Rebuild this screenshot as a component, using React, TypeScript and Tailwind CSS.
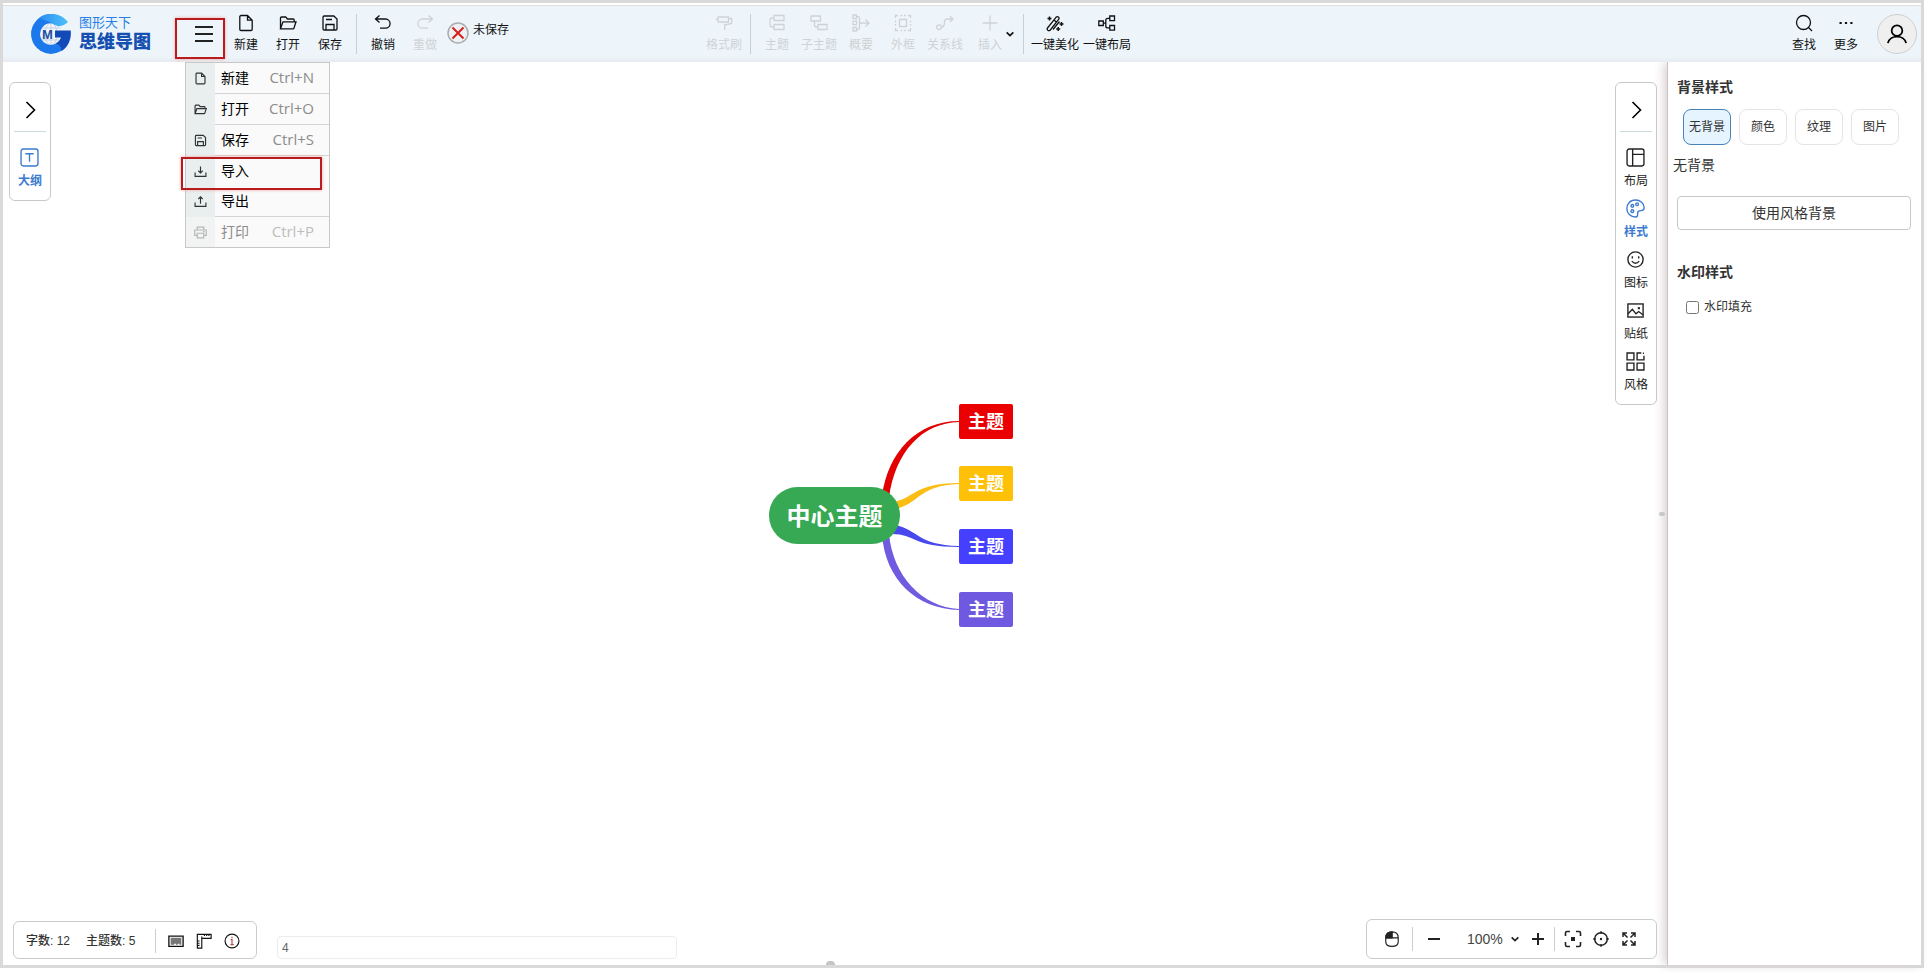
import { useState } from 'react'
import type { ReactNode } from 'react'

// --- ICONS ---
function Svg({ children, className = 'size-[18px]', w = 1.3 }: { children: ReactNode; className?: string; w?: number }) {
  return (
    <svg viewBox="0 0 18 18" className={className} fill="none" stroke="currentColor" strokeWidth={w} aria-hidden="true">
      {children}
    </svg>
  )
}

const icons: Record<string, ReactNode> = {
  file: <path d="M10.5 1.5H4A1.2 1.2 0 0 0 2.8 2.7v12.6A1.2 1.2 0 0 0 4 16.5h10a1.2 1.2 0 0 0 1.2-1.2V6.2zM10.5 1.5v4.7h4.7" />,
  folder: <path d="M1.5 14.8V4a1 1 0 0 1 1-1h4.2l1.8 2h5.7a1 1 0 0 1 1 1v1.8M1.5 14.8 4 7.8h13l-2 6.2a1 1 0 0 1-1 .8z" />,
  save: <path d="M2 3.2A1.2 1.2 0 0 1 3.2 2h9.6L16 5v9.8a1.2 1.2 0 0 1-1.2 1.2H3.2A1.2 1.2 0 0 1 2 14.8zM5 5.5h6M5 16v-5.500h8V16" />,
  undo: <path d="M5.5 1.5 1.5 5l4 3.5M1.5 5h10a4.6 4.6 0 0 1 0 9.2H6" />,
  redo: <path d="m12.5 1.5 4 3.5-4 3.5M16.5 5h-10a4.6 4.6 0 0 0 0 9.2H12" />,
  brush: <path d="M3 3h10.500v5H3zM3 5.500H.8M13.500 4.500h3.200v4.800l-7 1.700v5" strokeLinejoin="round" />,
  topic: <path d="M6 1.500h10v5H6zM6 10.500h10v5H6zM6 4H4.200Q2 4 2 6v5q0 2 2.200 2H6" strokeLinejoin="round" />,
  subtopic: <path d="M1 2h9.500v5H1zM8 10.500h9v5H8zM4.500 7v4q0 2 2 2H8" strokeLinejoin="round" />,
  summary: <path d="M1 1h3.500v3.500H1zM1 7.200h3.500v3.500H1zM1 13.500h3.500V17H1zM4.500 2.700h1.800Q7.500 2.700 7.500 4v10q0 1.300-1.200 1.300H4.500M7.500 9H17M13.500 5.500 17 9l-3.500 3.500" />,
  frame: (
    <>
      <path d="M5.500 5.500h7v7h-7z" />
      <path d="M1.500 4V1.500H4M6.500 1.500h1.800M10 1.500h1.800M14 1.500h2.500V4M16.500 6.500v1.800M16.500 10v1.800M16.500 14v2.500H14M11.800 16.500H10M8.300 16.500H6.500M4 16.500H1.500V14M1.500 11.800V10M1.500 8.300V6.500" />
    </>
  ),
  relation: (
    <>
      <circle cx="3" cy="13.2" r="2.3" />
      <path d="M5.300 13.200C11 13.200 6 5 11 5h6M13.800 2 17 5l-3.200 3" />
    </>
  ),
  plus: <path d="M9 1.500v15M1.500 9h15" />,
  magic: (
    <>
      <path d="M1.500 14 10 3.300q1.200-1.300 2.400-.3 1.200 1 .2 2.300L4.300 16q-1.200 1.200-2.500.2-1.200-1-.3-2.200zM8 6l2.600 2.200M7 15.500l6.500-8" />
      <path d="M3.500 2.500v4M1.500 4.500h4M15.500 8v4M13.500 10h4M12.200 13v4M10.200 15h4" strokeWidth="1.5" />
    </>
  ),
  autoLayout: <path d="M.8 7h4.500v4.500H.8zM11.800 2h4.700v4.700h-4.700zM11.800 11.500h4.700v4.700h-4.700zM5.300 9.200h2.500M11.800 4.300h-2q-2 0-2 2v5.600q0 2 2 2h2" />,
  search: (
    <>
      <circle cx="8.5" cy="8.5" r="7" />
      <path d="m13.500 13.500 3.500 3.500" />
    </>
  ),
  more: <path d="M2.500 9h2.200M7.900 9h2.200M13.300 9h2.200" strokeWidth="2.2" />,
  user: (
    <>
      <circle cx="9" cy="6" r="4.8" />
      <path d="M.8 17.200c1.700-7.800 14.700-7.800 16.400 0" />
    </>
  ),
  import: <path d="M9 2v9M6 8l3 3 3-3M1.500 10.500v5.200h15v-5.200" />,
  export: <path d="M9 12V2.500M6 5.500l3-3 3 3M1.500 10.500v5.200h15v-5.200" />,
  print: <path d="M4.500 5.500V1.500h9v4M4.500 13H1V5.500h16V13h-3.500M4.500 10h9v6.500h-9zM12.500 7.800h2" />,
  outline: (
    <>
      <rect x="1" y="1" width="16" height="16" rx="2" />
      <path d="M5 5.500h8M9 5.500V13" />
    </>
  ),
  layout: (
    <>
      <rect x="1" y="1" width="16" height="16" rx="2" />
      <path d="M6.300 1v16M6.300 6H17" />
    </>
  ),
  palette: (
    <>
      <path d="M9 1C3.500 1 .8 5 .8 9c0 4.500 3.500 8 8.200 8 2.500 0 2-2.300 2-3.500 0-2 1-2.500 3-2.500s3.200-.7 3.200-3C17.200 4 13.500 1 9 1z" />
      <circle cx="6" cy="6.5" r="1.300" />
      <circle cx="10.500" cy="5" r="1.300" />
      <circle cx="6" cy="11.500" r="1.300" />
    </>
  ),
  smile: (
    <>
      <circle cx="9" cy="9" r="7.2" />
      <path d="M5.500 10.500q3.500 4.200 7 0M6 6v2M12 6v2" />
    </>
  ),
  picture: (
    <>
      <rect x="1.8" y="2.8" width="14.4" height="12.4" />
      <path d="m2 12 4-4.200 3.500 4.400 2.500-2.200 4 3" />
      <path d="M11.200 6.800h2" strokeWidth="2" />
    </>
  ),
  grid: <path d="M1 1h6.500v6.500H1zM1 10.500h6.500V17H1zM10.500 10.500H17V17h-6.500zM14.500 1h-4v6.500H17V3.500M16 1.200h1" />,
  keyboard: (
    <>
      <path d="M1 3.500h16v11.500H1z" fill="#fff" stroke="#111" strokeWidth="1.5" />
      <path d="M3 5.300h12v7.900h-2v-1.200h-2v1.200H9v-1.200H7v1.200H3z" fill="#777" stroke="none" />
    </>
  ),
  ruler: <path d="M1.500 1.500h15.500v4.500H6.500V17h-5zM6.500 6v-2M9.500 3.500V1.500M12 3.500V1.500M14.500 3.500V1.500M1.500 9h2.500M1.500 11.500h2.500M1.500 14h2.500" />,
  info: (
    <>
      <circle cx="9" cy="9" r="7.8" />
      <path d="M7.500 7.500H9v5.500M7.200 13h3.800M9 4.200v1.600" stroke="#b04a4a" />
    </>
  ),
  mouse: (
    <>
      <path d="M9 1c-4.300 0-7 2-7 6.500v4.500c0 3.300 2.500 5.300 7 5.300s7-2 7-5.300V7.500C16 3 13.300 1 9 1zM2 7.800h14M9 1v6.800" />
      <path d="M2 7.800C2 3.500 4.500 1 9 1v6.800z" fill="currentColor" />
    </>
  ),
  focus: (
    <>
      <path d="M1.500 6V3Q1.500 1.500 3 1.500h3M12 1.500h3q1.500 0 1.500 1.500v3M16.500 12v3q0 1.500-1.500 1.500h-3M6 16.500H3Q1.500 16.500 1.500 15v-3" />
      <path d="M7 7h4v4H7z" fill="currentColor" stroke="none" />
    </>
  ),
  target: (
    <>
      <circle cx="9" cy="9" r="6.300" />
      <path d="M9 1.200v2.500M9 14.300v2.500M1.200 9h2.500M14.300 9h2.500" />
      <circle cx="9" cy="9" r="1.200" fill="currentColor" stroke="none" />
    </>
  ),
  expand: (
    <path d="M3 7V3h4M3 3l4.500 4.500M11 3h4v4M15 3l-4.500 4.500M15 11v4h-4M15 15l-4.500-4.500M7 15H3v-4M3 15l4.500-4.500" />
  ),
  down: <path d="m4 6.500 5 5 5-5" strokeWidth="2.5" />,
  right: <path d="m5.500 1 8 8-8 8" strokeWidth="1.6" />,
}

function Logo() {
  return (
    <a href="#" className="flex items-center gap-2 self-center">
      <svg viewBox="0 0 40 40" className="size-10" aria-hidden="true">
        <defs>
          <linearGradient id="tip" x1="0" x2="1">
            <stop offset="0" stopColor="#2a8cf2" />
            <stop offset="1" stopColor="#4cc2f9" />
          </linearGradient>
        </defs>
        <circle cx="20" cy="20" r="11.5" fill="#f1f5fa" />
        <g fill="none" stroke="#c3d2e6" strokeWidth="1">
          <path d="M9.500 14h20M9.500 26h20M20 9v22" />
          <ellipse cx="20" cy="20" rx="6" ry="11" />
        </g>
        <path d="M31 9.500A15.300 15.300 0 1 0 34 26" fill="none" stroke="#1c79ec" strokeWidth="9" />
        <path d="M8 4C17-3 30-1 37 8c-4 4-9 5-13 3C18 7 12 6 8 4z" fill="url(#tip)" />
        <path d="M24 16.500h15.700c1 9-2.500 16-9.200 20.500-.5-5-3-7-6-7.500 3-1.500 5-3.500 5.500-6h-6z" fill="#124bb8" />
        <text x="11" y="25" fontSize="13" fontWeight="700" fill="#1d4f9f" fontFamily="Liberation Sans, sans-serif">M</text>
      </svg>
      <span className="flex w-[73px] flex-col pb-0.5 whitespace-nowrap">
        <span className="text-[13px] leading-[18px] text-[#2a7fe6]">图形天下</span>
        <span className="text-[18px] leading-5 font-black text-[#1650b0]">思维导图</span>
      </span>
    </a>
  )
}

function Tool({ icon, label, width = 'w-[42px]', disabled = false }: { icon: string; label: string; width?: string; disabled?: boolean }) {
  return (
    <button type="button" disabled={disabled} className={`flex flex-none flex-col items-center gap-[5px] pt-2 text-xs leading-4 whitespace-nowrap text-[#111] disabled:text-[#cfd2d4] ${width}`}>
      <Svg>{icons[icon]}</Svg>
      <span className="flex justify-center">{label}</span>
    </button>
  )
}

const Divider = ({ className = '' }: { className?: string }) => <span className={`w-px flex-none bg-[#c5d0d8] ${className}`} />

const menuItems = [
  { icon: 'file', label: '新建', keys: 'Ctrl+N', line: true },
  { icon: 'folder', label: '打开', keys: 'Ctrl+O', line: true },
  { icon: 'save', label: '保存', keys: 'Ctrl+S', line: true },
  { icon: 'import', label: '导入', marked: true },
  { icon: 'export', label: '导出', line: true },
  { icon: 'print', label: '打印', keys: 'Ctrl+P', disabled: true },
]

function FileMenu() {
  return (
    <div className="absolute top-full left-0.5 z-20 w-[145px] border border-[#c8c8c8] bg-[#fafafa]">
      {menuItems.map((item) => (
        <button key={item.label} type="button" disabled={item.disabled} className={`relative flex w-full items-stretch text-left text-sm text-black disabled:text-[#8c8c8c] ${item.line ? 'h-[31px]' : 'h-[30px]'}`}>
          <span className={`flex w-[29px] flex-none items-center justify-center ${item.disabled ? 'bg-[#f1f4f3] text-[#b5b5b5]' : 'bg-[#e8efee] text-[#333]'}`}>
            <Svg className="size-[13px]" w={1.6}>{icons[item.icon]}</Svg>
          </span>
          <span className={`flex flex-1 items-center justify-between pr-[15px] pl-1.5 ${item.line ? 'border-b border-[#d4d4d4]' : ''}`}>
            {item.label}
            <span className={`font-['Open_Sans',sans-serif] text-[15px] ${item.disabled ? 'text-[#bdbdbd]' : 'text-[#8c8c8c]'}`}>{item.keys}</span>
          </span>
          {item.marked && <span className="absolute top-px -left-[5px] z-10 h-[33px] w-[141px] border-2 border-[#b81c1c] shadow-[0_0_3px_#f0a0a0]" />}
        </button>
      ))}
    </div>
  )
}

function Header() {
  return (
    <header className="relative z-10 mt-0.5 flex h-[57px] flex-none border-t border-[#dedede] bg-[#edf5fb] bg-linear-to-b from-[#edf5fb] from-90% to-[#e6ebf0] pr-1 pl-7">
      <Logo />
      <div className="relative ml-[31px] flex w-[42px] flex-none items-center justify-center">
        <button type="button" aria-label="菜单" className="text-[#222]">
          <Svg w={1.8}><path d="M0 2h18M0 9h18M0 16h18" /></Svg>
        </button>
        <span className="absolute top-3 -left-2 h-[41px] w-[50px] border-2 border-[#b81c1c] shadow-[0_0_3px_#f0a0a0]" />
        <FileMenu />
      </div>
      <Tool icon="file" label="新建" />
      <Tool icon="folder" label="打开" />
      <Tool icon="save" label="保存" />
      <Divider className="mx-[5px] my-2" />
      <Tool icon="undo" label="撤销" />
      <Tool icon="redo" label="重做" disabled />
      <div className="flex flex-none items-start gap-1 pt-4 pl-px text-xs leading-4 text-[#111]">
        <svg viewBox="0 0 22 22" className="size-[22px]" fill="none" aria-hidden="true">
          <circle cx="11" cy="11" r="10" fill="#eef1f3" stroke="#a9adb0" strokeWidth="1.5" />
          <path d="m5.500 5.500 11 11m0-11-11 11" stroke="#d81e1e" strokeWidth="2" />
        </svg>
        未保存
      </div>

      <div className="grow-[23]" />

      <Tool icon="brush" label="格式刷" disabled />
      <Divider className="mx-[5px] my-2" />
      <Tool icon="topic" label="主题" disabled />
      <Tool icon="subtopic" label="子主题" disabled />
      <Tool icon="summary" label="概要" disabled />
      <Tool icon="frame" label="外框" disabled />
      <Tool icon="relation" label="关系线" disabled />
      <div className="flex flex-none pl-2.5">
        <Tool icon="plus" label="插入" width="w-7" disabled />
        <button type="button" aria-label="更多插入" className="text-[#111]">
          <Svg className="size-3">{icons.down}</Svg>
        </button>
      </div>
      <Divider className="my-2 mr-[5px] ml-[7px]" />
      <Tool icon="magic" label="一键美化" width="w-[52px]" />
      <Tool icon="autoLayout" label="一键布局" width="w-[52px]" />

      <div className="grow-[77]" />

      <Tool icon="search" label="查找" />
      <Tool icon="more" label="更多" />
      <button type="button" aria-label="用户" className="ml-2.5 flex size-10 flex-none items-center justify-center self-center rounded-full border border-[#cfcfcf] bg-[#efefef] text-black">
        <Svg className="size-5" w={1.6}>{icons.user}</Svg>
      </button>
    </header>
  )
}

// --- MIND MAP ---
const topics = [
  { color: 'bg-[#ea0000]', pos: 'top-[342px]' },
  { color: 'bg-[#ffc107]', pos: 'top-[404px]' },
  { color: 'bg-[#4540ff]', pos: 'top-[467px]' },
  { color: 'bg-[#6f59e0]', pos: 'top-[530px]' },
]

function MindMap() {
  return (
    <>
      <svg viewBox="0 0 90 220" className="absolute top-[350px] left-[870px] h-[220px] w-[90px]" aria-hidden="true">
        <path d="M9 84C15 40 44 9 86 9v1C49 11 22 40 16 86z" fill="#e20000" />
        <path d="M19 90C40 88 40 71 86 71v1C46 73 46 92 22 97z" fill="#fbbd12" />
        <path d="M22 113C46 118 44 133 86 134v1C40 135 42 122 19 122z" fill="#4848ee" />
        <path d="M9 122C12 168 44 197 86 198v-1C49 195 20 164 16 122z" fill="#6f5be0" />
      </svg>
      <div className="absolute top-[425px] left-[766px] flex h-[57px] w-[131px] items-center justify-center rounded-full bg-[#37a954] pt-0.5 text-2xl font-bold text-white">中心主题</div>
      {topics.map((t) => (
        <div key={t.pos} className={`absolute left-[956px] flex h-[35px] w-[54px] items-center justify-center rounded-xs text-lg font-bold text-white ${t.color} ${t.pos}`}>主题</div>
      ))}
    </>
  )
}

const sideTabs = [
  { icon: 'layout', label: '布局' },
  { icon: 'palette', label: '样式' },
  { icon: 'smile', label: '图标' },
  { icon: 'picture', label: '贴纸' },
  { icon: 'grid', label: '风格' },
]

function SidePanel({ items, active, className }: { items: typeof sideTabs; active: string; className: string }) {
  return (
    <nav className={`absolute top-5 flex w-[42px] flex-col items-center rounded-md border border-[#c8c8c8] bg-white pb-[9px] ${className}`}>
      <button type="button" aria-label="收起" className="flex h-[49px] w-8 items-end justify-center border-b border-[#ccd8dc] pb-3 text-black">
        <Svg>{icons.right}</Svg>
      </button>
      <div className="mt-4 flex flex-col gap-2">
        {items.map((it) => (
          <button key={it.label} type="button" className={`flex flex-col items-center gap-1 text-xs leading-5 ${it.label === active ? 'font-bold text-[#3c7bd0]' : 'text-[#222]'}`}>
            <Svg className="size-[19px]">{icons[it.icon]}</Svg>
            {it.label}
          </button>
        ))}
      </div>
    </nav>
  )
}

function StatusBar() {
  return (
    <div className="absolute bottom-1.5 left-2.5 flex h-[38px] w-[244px] items-center rounded-md border border-[#c8cccc] bg-white pt-0.5 pl-3 text-xs font-medium text-[#333]">
      <span className="pr-4">字数: 12</span>
      <span>主题数: 5</span>
      <div className="ml-auto flex items-center gap-3 pr-4 text-[#111]">
        <Divider className="h-6" />
        <button type="button" aria-label="快捷键"><Svg className="size-4">{icons.keyboard}</Svg></button>
        <button type="button" aria-label="标尺"><Svg className="size-4">{icons.ruler}</Svg></button>
        <button type="button" aria-label="信息"><Svg className="size-4">{icons.info}</Svg></button>
      </div>
    </div>
  )
}

function ZoomBar() {
  return (
    <div className="absolute right-2.5 bottom-1.5 flex h-10 items-center rounded-md border border-[#c8cccc] bg-white pr-[18px] pl-[17px] text-[#222]">
      <button type="button" aria-label="鼠标"><Svg className="size-4">{icons.mouse}</Svg></button>
      <Divider className="mr-[15px] ml-3 h-6" />
      <button type="button" aria-label="缩小"><Svg className="size-3" w={3}><path d="M0 9h18" /></Svg></button>
      <div className="relative ml-[27px] flex w-[54px] items-center">
        <select aria-label="缩放比例" className="w-full appearance-none text-sm text-[#444] outline-none">
          <option>100%</option>
        </select>
        <Svg className="pointer-events-none absolute right-0 size-3">{icons.down}</Svg>
      </div>
      <button type="button" aria-label="放大" className="ml-[11px]"><Svg className="size-3" w={3}><path d="M0 9h18M9 0v18" /></Svg></button>
      <Divider className="mr-[9px] ml-2.5 h-6" />
      <div className="flex gap-2.5">
        <button type="button" aria-label="适应画布"><Svg w={1.6}>{icons.focus}</Svg></button>
        <button type="button" aria-label="居中"><Svg w={1.5}>{icons.target}</Svg></button>
        <button type="button" aria-label="全屏"><Svg w={1.5}>{icons.expand}</Svg></button>
      </div>
    </div>
  )
}

const bgTypes = ['无背景', '颜色', '纹理', '图片']

function StylePanel() {
  const [bg, setBg] = useState('无背景')
  return (
    <aside className="w-[254px] flex-none border-l border-[#c9c2c2] bg-white pt-[15px] pr-2.5 text-[#333] shadow-[-3px_0_10px_#d8d0d0]">
      <h2 className="pl-[9px] text-sm leading-5 font-bold">背景样式</h2>
      <div className="mt-3 flex gap-2 pl-[15px]">
        {bgTypes.map((t) => (
          <button key={t} type="button" onClick={() => setBg(t)} className={`h-9 w-12 flex-none rounded-lg border text-xs whitespace-nowrap ${bg === t ? 'border-[#4a82b8] bg-[#e6f4ff]' : 'border-[#e4e4e4]'}`}>{t}</button>
        ))}
      </div>
      <p className="mt-2.5 pl-[5px] text-sm leading-5">{bg}</p>
      <div className="mt-[21px] pl-[9px]">
        <button type="button" className="h-[34px] w-full rounded-sm border border-[#c8c8c8] text-sm">使用风格背景</button>
      </div>
      <h2 className="mt-8 pl-[9px] text-sm leading-5 font-bold">水印样式</h2>
      <label className="mt-[15px] flex h-5 items-center gap-[5px] pl-[18px] text-xs">
        <input type="checkbox" className="size-[13px]" />
        水印填充
      </label>
    </aside>
  )
}

export default function App() {
  return (
    <div className="h-screen overflow-hidden bg-white pr-[3px] pb-1 font-['Liberation_Sans','Noto_Sans_CJK_SC',sans-serif]">
      <div className="flex h-full flex-col border-[3px] border-[#d9d9d9]">
        <Header />
        <div className="flex min-h-0 flex-1">
          <main className="relative min-w-0 flex-1">
            <MindMap />
            <SidePanel items={[{ icon: 'outline', label: '大纲' }]} active="大纲" className="left-1.5" />
            <SidePanel items={sideTabs} active="样式" className="right-2.5" />
            <StatusBar />
            <input type="text" aria-label="备注" defaultValue="4" className="absolute bottom-1.5 left-[274px] h-[23px] w-[400px] rounded-sm border border-[#ececec] px-1 text-xs text-[#666]" />
            <ZoomBar />
            <span className="absolute bottom-0 left-1/2 h-1 w-[9px] -translate-x-full rounded-t-sm bg-[#c4c4c4]" />
            <span className="absolute top-1/2 right-0.5 h-1 w-1.5 -translate-y-1/2 rounded-full bg-[#c8c8c8]" />
          </main>
          <StylePanel />
        </div>
      </div>
    </div>
  )
}
